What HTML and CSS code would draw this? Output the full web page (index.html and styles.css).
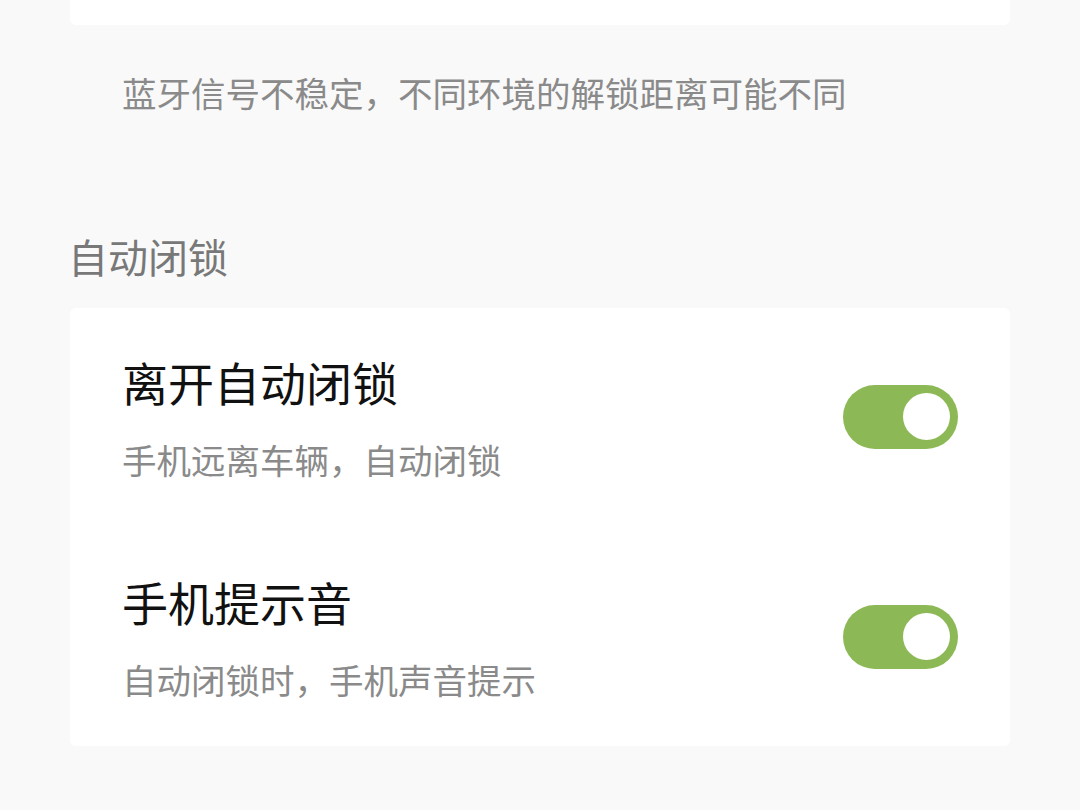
FILE: index.html
```html
<!DOCTYPE html>
<html lang="zh-CN">
<head>
<meta charset="utf-8">
<link rel="stylesheet" href="styles.css">
</head>
<body>
<div class="page">
  <div class="card card-top"></div>
  <p class="note">蓝牙信号不稳定，不同环境的解锁距离可能不同</p>
  <h2 class="section-title">自动闭锁</h2>
  <div class="card card-list">
    <div class="row">
      <div class="texts">
        <div class="title">离开自动闭锁</div>
        <div class="sub">手机远离车辆，自动闭锁</div>
      </div>
      <div class="switch on"><span class="knob"></span></div>
    </div>
    <div class="row">
      <div class="texts">
        <div class="title">手机提示音</div>
        <div class="sub">自动闭锁时，手机声音提示</div>
      </div>
      <div class="switch on"><span class="knob"></span></div>
    </div>
  </div>
</div>
</body>
</html>
```
FILE: styles.css
```css
html, body {
  margin: 0;
  padding: 0;
  background: #f9f9f9;
  font-family: "Noto Sans CJK SC", "Noto Sans", sans-serif;
}
.page {
  padding: 0 70px;
  display: flex;
  flex-direction: column;
}
.card {
  background: #ffffff;
  border-radius: 6px;
}
.card-top {
  height: 25px;
  border-top-left-radius: 0;
  border-top-right-radius: 0;
}
.note {
  margin: 46px 0 0;
  padding-left: 52px;
  font-size: 34.5px;
  line-height: 42px;
  color: #8a8a8a;
}
.section-title {
  margin: 119px 0 0 -2px;
  font-size: 40px;
  line-height: 48px;
  font-weight: normal;
  color: #787878;
}
.card-list {
  margin-top: 28px;
  padding: 45px 52px 46px 52px;
  display: flex;
  flex-direction: column;
  gap: 93px;
}
.row {
  display: flex;
  align-items: center;
  justify-content: space-between;
}
.texts {
  display: flex;
  flex-direction: column;
  gap: 29px;
}
.title {
  font-size: 46px;
  line-height: 56px;
  color: #111111;
}
.sub {
  font-size: 34.5px;
  line-height: 42px;
  color: #8a8a8a;
}
.switch {
  width: 115px;
  height: 64px;
  border-radius: 32px;
  background: #8cb955;
  display: flex;
  align-items: center;
  justify-content: flex-end;
  padding-right: 8px;
  box-sizing: border-box;
}
.knob {
  width: 47px;
  height: 47px;
  border-radius: 50%;
  background: #ffffff;
}
```
